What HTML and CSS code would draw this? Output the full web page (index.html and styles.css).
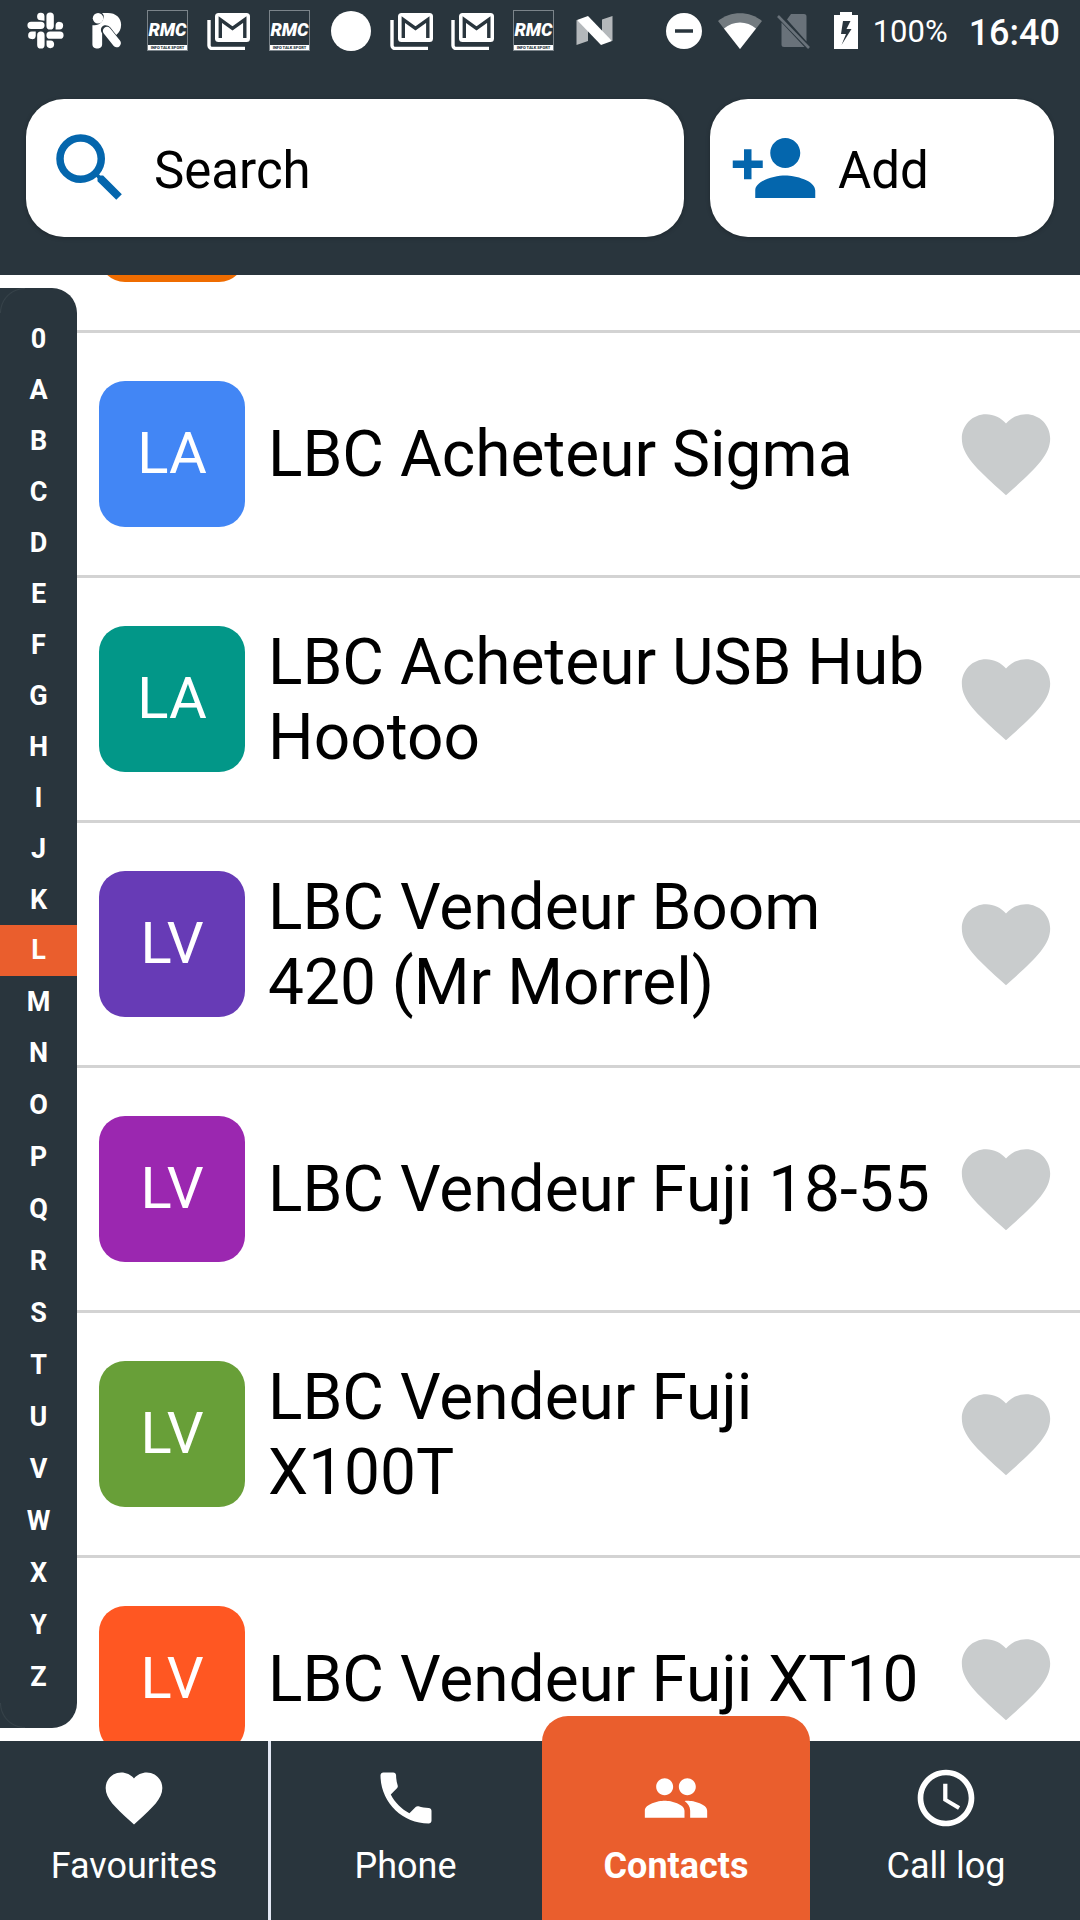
FILE: index.html
```html
<!DOCTYPE html>
<html lang="en">
    <head>
        <meta charset="utf-8">
        <title>Contacts</title>
        <link rel="stylesheet" href="styles.css">
    </head>
    <body>
        <!-- shared icons -->
        <svg class="sprite">
            <symbol id="heart" viewBox="0 0 24 24">
                <path d="M12 21.35l-1.45-1.32C5.4 15.36 2 12.28 2 8.5 2 5.42 4.42 3 7.5 3c1.74 0 3.41.81 4.5 2.09C13.09 3.81 14.76 3 16.5 3 19.58 3 22 5.42 22 8.5c0 3.78-3.4 6.86-8.55 11.54L12 21.35z"/>
            </symbol>
            <symbol id="gmail" viewBox="0 0 44 38">
                <path d="M2 8v25.500a3 3 0 0 0 3 3h33" fill="none" stroke="#fff" stroke-width="3.400"/>
                <rect x="8" y="1" width="35" height="29" rx="3.500"/>
                <path d="M13.300 26V7.500l12.200 8.800 12.300-8.800V26" fill="none" stroke="#29353d" stroke-width="3.400"/>
            </symbol>
        </svg>

        <div id="screen">
            <div id="statusBar">
                <div class="notifications">
                    <svg class="slack" viewBox="0 0 36 36">
                        <path d="M4 13h9.500M22.500 4v9.500M13.500 22.500V32M22.500 22.500H32" stroke="#fff" stroke-width="7.200" stroke-linecap="round"/>
                        <path d="M17 8.500V4a3.600 3.600 0 1 0-3.600 4zM27.800 17V13a3.700 3.700 0 1 1 3.600 4zM8.500 19V23a3.700 3.700 0 1 1-3.600-4zM19 27.800H23a3.700 3.700 0 1 1-4 3.600z"/>
                    </svg>
                    <svg class="runner" viewBox="0 0 30 38">
                        <path d="M0 13.500C7 15 12.500 9 11.500 3L10 1h6c8 0 13.500 5 13.500 12 0 5-2 8-5 10.500l-6-7.500c-5-5-11-1-9.500 4l1 2v11c0 6-10 6-10 0z"/>
                        <circle cx="5.800" cy="6.500" r="5.400"/>
                        <path d="M15 19.500l10 12.500" stroke="#fff" stroke-width="8.500" stroke-linecap="round"/>
                    </svg>
                    <div class="rmc"><b>RMC</b><span>INFO TALK SPORT</span></div>
                    <svg class="gmail"><use href="#gmail"/></svg>
                    <div class="rmc"><b>RMC</b><span>INFO TALK SPORT</span></div>
                    <div class="dot"></div>
                    <svg class="gmail"><use href="#gmail"/></svg>
                    <svg class="gmail"><use href="#gmail"/></svg>
                    <div class="rmc"><b>RMC</b><span>INFO TALK SPORT</span></div>
                    <svg class="nougat" viewBox="0 0 37 31">
                        <path d="M.500 5L12 10v16L.500 30zM26 4.500L36.500 1v25l-10.500-6z" opacity=".65"/>
                        <path d="M1 5L12 1l24 25-11 4z"/>
                    </svg>
                </div>
                <div class="system">
                    <svg class="dnd" viewBox="0 0 36 36">
                        <path d="M18 0a18 18 0 1 0 0 36a18 18 0 1 0 0-36zM9 16.200h18v3.600H9z" fill-rule="evenodd"/>
                    </svg>
                    <svg class="wifi" viewBox="0 0 44 36">
                        <path d="M0 8C12-2.500 32-2.500 44 8L22 36z" opacity=".35"/>
                        <path d="M6 15.500C15 7.500 29 7.500 38 15.500L22 36z"/>
                    </svg>
                    <svg class="sim" viewBox="0 0 34 36">
                        <path d="M14 1h13a2.500 2.500 0 0 1 2.500 2.500V28.500L10 6.500zM4.500 9.500L27.500 34H7a2.500 2.500 0 0 1-2.500-2.500z"/>
                        <path d="M1 3l31 32" stroke="#69727a" stroke-width="2.600"/>
                    </svg>
                    <svg class="battery" viewBox="0 0 24 37">
                        <path d="M6 0h12v3h6v34H0V3h6zM9 9L7 22h5L7.500 33 17.500 17h-5L16.500 9z" fill-rule="evenodd"/>
                    </svg>
                    <span class="percent">100%</span>
                    <span class="clock">16:40</span>
                </div>
            </div>

            <div id="toolbar">
                <div class="button search">
                    <svg viewBox="0 0 24 24"><path d="M15.500 14h-.79l-.28-.27A6.471 6.471 0 0 0 16 9.500 6.500 6.500 0 1 0 9.500 16c1.610 0 3.090-.59 4.230-1.570l.27.28v.79l5 4.990L20.490 19l-4.990-5zm-6 0C7.010 14 5 11.990 5 9.500S7.010 5 9.500 5 14 7.010 14 9.500 11.990 14 9.500 14z"/></svg>
                    <span>Search</span>
                </div>
                <div class="button add">
                    <svg viewBox="0 0 24 24"><path d="M15 12c2.210 0 4-1.790 4-4s-1.790-4-4-4-4 1.790-4 4 1.790 4 4 4zm-9-2V7H4v3H1v2h3v3h2v-3h3v-2H6zm9 4c-2.670 0-8 1.340-8 4v2h16v-2c0-2.660-5.330-4-8-4z"/></svg>
                    <span>Add</span>
                </div>
            </div>

            <div id="content">
                <div id="alphabet">
                    <span>0</span><span>A</span><span>B</span><span>C</span><span>D</span><span>E</span><span>F</span>
                    <span>G</span><span>H</span><span>I</span><span>J</span><span>K</span><span class="selected">L</span><span>M</span>
                    <span>N</span><span>O</span><span>P</span><span>Q</span><span>R</span><span>S</span><span>T</span>
                    <span>U</span><span>V</span><span>W</span><span>X</span><span>Y</span><span>Z</span>
                </div>
                <div id="contacts">
                    <div class="contact">
                        <div class="avatar amber"></div>
                    </div>
                    <div class="contact">
                        <div class="avatar blue">LA</div>
                        <div class="name">LBC Acheteur Sigma</div>
                        <svg class="favourite"><use href="#heart"/></svg>
                    </div>
                    <div class="contact">
                        <div class="avatar teal">LA</div>
                        <div class="name">LBC Acheteur USB Hub Hootoo</div>
                        <svg class="favourite"><use href="#heart"/></svg>
                    </div>
                    <div class="contact">
                        <div class="avatar indigo">LV</div>
                        <div class="name">LBC Vendeur Boom 420 (Mr Morrel)</div>
                        <svg class="favourite"><use href="#heart"/></svg>
                    </div>
                    <div class="contact">
                        <div class="avatar purple">LV</div>
                        <div class="name">LBC Vendeur Fuji 18-55</div>
                        <svg class="favourite"><use href="#heart"/></svg>
                    </div>
                    <div class="contact">
                        <div class="avatar green">LV</div>
                        <div class="name">LBC Vendeur Fuji X100T</div>
                        <svg class="favourite"><use href="#heart"/></svg>
                    </div>
                    <div class="contact">
                        <div class="avatar orange">LV</div>
                        <div class="name">LBC Vendeur Fuji XT10</div>
                        <svg class="favourite"><use href="#heart"/></svg>
                    </div>
                </div>
            </div>

            <div id="tabs">
                <div class="tab">
                    <svg><use href="#heart"/></svg>
                    <span>Favourites</span>
                </div>
                <div class="tab">
                    <svg viewBox="0 0 24 24"><path d="M6.620 10.790c1.440 2.830 3.760 5.140 6.590 6.590l2.200-2.200c.27-.27.67-.36 1.020-.24 1.120.37 2.330.57 3.570.57.55 0 1 .45 1 1V20c0 .55-.45 1-1 1-9.390 0-17-7.610-17-17 0-.55.45-1 1-1h3.500c.55 0 1 .45 1 1 0 1.250.2 2.450.57 3.570.11.35.03.74-.25 1.020l-2.200 2.200z"/></svg>
                    <span>Phone</span>
                </div>
                <div class="tab active">
                    <svg viewBox="0 0 24 24"><path d="M16 11c1.660 0 2.990-1.340 2.990-3S17.660 5 16 5c-1.660 0-3 1.340-3 3s1.340 3 3 3zm-8 0c1.660 0 2.990-1.340 2.990-3S9.660 5 8 5C6.340 5 5 6.340 5 8s1.340 3 3 3zm0 2c-2.330 0-7 1.170-7 3.500V19h14v-2.500c0-2.330-4.670-3.500-7-3.500zm8 0c-.29 0-.62.02-.97.05 1.160.84 1.970 1.970 1.970 3.450V19h6v-2.500c0-2.330-4.670-3.500-7-3.500z"/></svg>
                    <span>Contacts</span>
                </div>
                <div class="tab">
                    <svg viewBox="0 0 24 24"><path d="M11.990 2C6.470 2 2 6.480 2 12s4.470 10 9.990 10C17.520 22 22 17.520 22 12S17.520 2 11.990 2zM12 20c-4.420 0-8-3.580-8-8s3.580-8 8-8 8 3.580 8 8-3.580 8-8 8zm.5-13H11v6l5.250 3.150.75-1.230-4.500-2.670z"/></svg>
                    <span>Call log</span>
                </div>
            </div>
        </div>
    </body>
</html>
```
FILE: styles.css
```css
            body {
                margin: 0;
                font-family: Roboto, sans-serif;
                background-color: #ffffff;
            }

            .sprite {
                display: none;
            }

            svg {
                display: block;
                flex: none;
                fill: #ffffff;
            }

            #screen {
                display: flex;
                flex-direction: column;
                width: 1080px;
                height: 1920px;
                overflow: hidden;
            }

            /* status bar */
            #statusBar {
                display: flex;
                justify-content: space-between;
                height: 61px;
                padding: 0 20px 0 15px;
                background-color: #29353d;
                color: #ffffff;
            }

            .notifications {
                display: grid;
                grid-template-columns: repeat(10, 61px);
                align-items: center;
                justify-items: center;
            }

            .slack {
                width: 37px;
                height: 37px;
            }

            .runner {
                width: 30px;
                height: 37px;
            }

            .rmc {
                display: flex;
                flex-direction: column;
                justify-content: flex-end;
                box-sizing: border-box;
                width: 41px;
                height: 41px;
                border: 1px solid #7b848a;
                text-align: center;
            }

            .rmc b {
                font-size: 18px;
                font-weight: 900;
                font-style: italic;
                line-height: 20px;
                padding-bottom: 5px;
            }

            .rmc span {
                height: 5px;
                overflow: hidden;
                background-color: #ffffff;
                color: #29353d;
                font-size: 4px;
                font-weight: 900;
                line-height: 5px;
                white-space: nowrap;
            }

            .gmail {
                width: 44px;
                height: 38px;
            }

            .dot {
                width: 40px;
                height: 40px;
                border-radius: 50%;
                background-color: #ffffff;
            }

            .nougat {
                width: 37px;
                height: 31px;
            }

            .system {
                display: flex;
                align-items: center;
            }

            .dnd {
                width: 36px;
                height: 36px;
                margin-right: 16px;
            }

            .wifi {
                width: 44px;
                height: 36px;
                margin-right: 15px;
            }

            .sim {
                width: 34px;
                height: 36px;
                margin-right: 23px;
                fill: #69727a;
            }

            .battery {
                width: 24px;
                height: 37px;
                margin-right: 15px;
            }

            .percent {
                width: 96px;
                padding-top: 2px;
                font-size: 31px;
            }

            .clock {
                padding-top: 4px;
                font-size: 36px;
                font-weight: 500;
            }

            /* search and add */
            #toolbar {
                display: flex;
                gap: 26px;
                box-sizing: border-box;
                height: 214px;
                padding: 38px 26px;
                background-color: #29353d;
            }

            .button {
                display: flex;
                align-items: center;
                gap: 19px;
                box-sizing: border-box;
                height: 138px;
                padding-left: 19px;
                border-radius: 38px;
                background-color: #ffffff;
                box-shadow: 0 1px 4px rgba(0, 0, 0, 0.25);
                font-size: 51px;
            }

            .button svg {
                width: 90px;
                height: 90px;
                fill: #0466ad;
            }

            .button span {
                padding-top: 4px;
            }

            .search {
                width: 658px;
            }

            .add {
                width: 344px;
            }

            /* contact list */
            #content {
                display: flex;
                align-items: flex-start;
                height: 1466px;
                overflow: hidden;
            }

            #alphabet {
                display: grid;
                grid-template-rows: repeat(14, 51px) repeat(13, 52px);
                flex: none;
                width: 77px;
                margin-top: 13px;
                padding: 25px 0;
                border-radius: 0 25px 25px 0;
                background:
                    radial-gradient(circle at 100% 100%, #29353d 23.5px, #364249 24.5px, #29353d 25.5px) 0 0 / 25px 25px no-repeat,
                    radial-gradient(circle at 100% 0, #29353d 23.5px, #364249 24.5px, #29353d 25.5px) 0 100% / 25px 25px no-repeat,
                    #29353d;
                color: #ffffff;
                font-size: 27px;
                font-weight: bold;
                text-align: center;
                line-height: 53px;
            }

            .selected {
                background-color: #ea5e2d;
                line-height: 51px;
            }

            #contacts {
                flex: 1;
                margin-top: -187px;
            }

            .contact {
                display: flex;
                align-items: center;
                box-sizing: border-box;
                height: 245px;
                padding: 0 21px 0 22px;
                border-bottom: 3px solid #d3d3d3;
            }

            .avatar {
                flex: none;
                width: 146px;
                height: 146px;
                border-radius: 26px;
                color: #ffffff;
                font-size: 58px;
                line-height: 145px;
                text-align: center;
            }

            .name {
                flex: 1;
                padding: 1px 20px 0 23px;
                font-size: 64px;
                line-height: 75px;
            }

            .favourite {
                width: 106px;
                height: 106px;
                fill: #c9cccd;
            }

            .amber { background-color: #ef6c00; }
            .blue { background-color: #4286f5; }
            .teal { background-color: #029788; }
            .indigo { background-color: #673bb6; }
            .purple { background-color: #9b27b0; }
            .green { background-color: #689f38; }
            .orange { background-color: #ff5722; }

            /* bottom tabs */
            #tabs {
                display: grid;
                grid-template-columns: 271px 271px 268px 270px;
                grid-template-rows: 179px;
                align-items: end;
                height: 179px;
                background-color: #29353d;
                color: #ffffff;
                font-size: 36px;
            }

            .tab {
                display: flex;
                flex-direction: column;
                align-items: center;
                box-sizing: border-box;
                height: 179px;
                padding-top: 23px;
            }

            .tab:first-child {
                border-right: 3px solid #e3e8f4;
            }

            .tab:nth-child(2) {
                padding-right: 2px;
            }

            .tab:last-child {
                padding-left: 2px;
            }

            .tab svg {
                width: 68px;
                height: 68px;
                margin-bottom: 13px;
            }

            .tab.active {
                height: 204px;
                padding-top: 48px;
                border-radius: 26px 26px 0 0;
                background-color: #ea5e2d;
                font-weight: bold;
            }
```
